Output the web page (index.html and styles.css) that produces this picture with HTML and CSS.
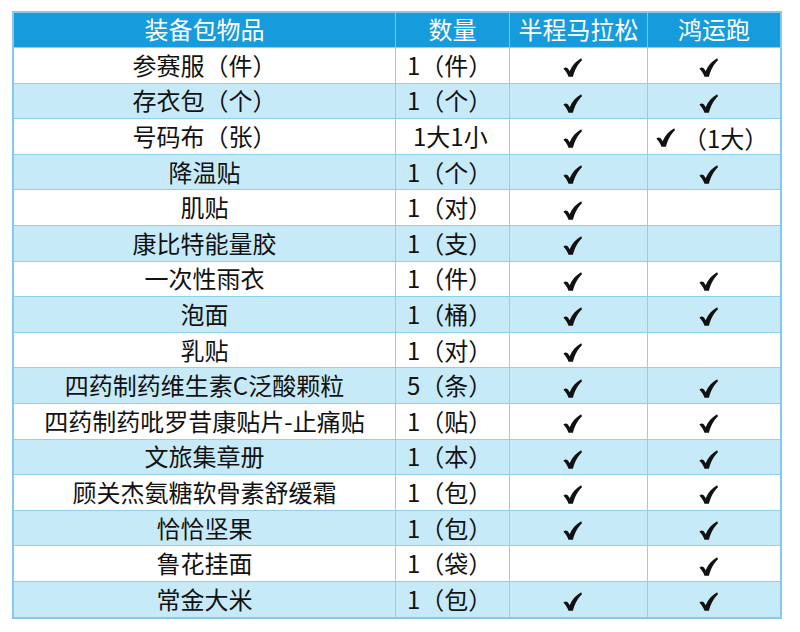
FILE: index.html
```html
<!DOCTYPE html>
<html lang="zh">
<head>
<meta charset="utf-8">
<link rel="stylesheet" href="styles.css">
</head>
<body>
<svg width="0" height="0" class="defs">
  <defs>
    <symbol id="chk" viewBox="0 0 18 18">
      <path d="M0.4 10.2 C2.2 8.4 4.1 8.9 5.3 10.9 L6.3 12.6 C8.8 7 12.3 3 17.2 0.3 L18 2.1 C14 5.8 11.4 10.6 9.4 17.7 L5.2 17.7 C4.2 15 2.7 12.4 0.4 10.2 Z"/>
    </symbol>
  </defs>
</svg>
<table class="kit">
  <thead>
    <tr><th>装备包物品</th><th>数量</th><th>半程马拉松</th><th>鸿运跑</th></tr>
  </thead>
  <tbody>
    <tr><td>参赛服（件）</td><td class="q">1（件）</td><td><svg class="c"><use href="#chk"/></svg></td><td><svg class="c"><use href="#chk"/></svg></td></tr>
    <tr><td>存衣包（个）</td><td class="q">1（个）</td><td><svg class="c"><use href="#chk"/></svg></td><td><svg class="c"><use href="#chk"/></svg></td></tr>
    <tr><td>号码布（张）</td><td class="q q2">1大1小</td><td><svg class="c"><use href="#chk"/></svg></td><td class="mix"><svg class="c"><use href="#chk"/></svg><span>（1大）</span></td></tr>
    <tr><td>降温贴</td><td class="q">1（个）</td><td><svg class="c"><use href="#chk"/></svg></td><td><svg class="c"><use href="#chk"/></svg></td></tr>
    <tr><td>肌贴</td><td class="q">1（对）</td><td><svg class="c"><use href="#chk"/></svg></td><td></td></tr>
    <tr><td>康比特能量胶</td><td class="q">1（支）</td><td><svg class="c"><use href="#chk"/></svg></td><td></td></tr>
    <tr><td>一次性雨衣</td><td class="q">1（件）</td><td><svg class="c"><use href="#chk"/></svg></td><td><svg class="c"><use href="#chk"/></svg></td></tr>
    <tr><td>泡面</td><td class="q">1（桶）</td><td><svg class="c"><use href="#chk"/></svg></td><td><svg class="c"><use href="#chk"/></svg></td></tr>
    <tr><td>乳贴</td><td class="q">1（对）</td><td><svg class="c"><use href="#chk"/></svg></td><td></td></tr>
    <tr><td>四药制药维生素C泛酸颗粒</td><td class="q">5（条）</td><td><svg class="c"><use href="#chk"/></svg></td><td><svg class="c"><use href="#chk"/></svg></td></tr>
    <tr><td>四药制药吡罗昔康贴片-止痛贴</td><td class="q">1（贴）</td><td><svg class="c"><use href="#chk"/></svg></td><td><svg class="c"><use href="#chk"/></svg></td></tr>
    <tr><td>文旅集章册</td><td class="q">1（本）</td><td><svg class="c"><use href="#chk"/></svg></td><td><svg class="c"><use href="#chk"/></svg></td></tr>
    <tr><td>顾关杰氨糖软骨素舒缓霜</td><td class="q">1（包）</td><td><svg class="c"><use href="#chk"/></svg></td><td><svg class="c"><use href="#chk"/></svg></td></tr>
    <tr><td>恰恰坚果</td><td class="q">1（包）</td><td><svg class="c"><use href="#chk"/></svg></td><td><svg class="c"><use href="#chk"/></svg></td></tr>
    <tr><td>鲁花挂面</td><td class="q">1（袋）</td><td></td><td><svg class="c"><use href="#chk"/></svg></td></tr>
    <tr><td>常金大米</td><td class="q">1（包）</td><td><svg class="c"><use href="#chk"/></svg></td><td><svg class="c"><use href="#chk"/></svg></td></tr>
  </tbody>
</table>
</body>
</html>
```

FILE: styles.css
```css
html, body {
  margin: 0;
  padding: 0;
  background: #ffffff;
}
body {
  font-family: "Noto Sans CJK SC", "Noto Sans", sans-serif;
  color: #121212;
}
.defs {
  position: absolute;
}
.kit {
  margin: 11px 0 0 12px;
  width: 770px;
  border-collapse: collapse;
  table-layout: fixed;
  border: 2px solid #86c9ea;
}
.kit th {
  background: #169bdc;
  color: #ffffff;
  font-weight: 400;
  font-size: 24px;
  height: 32px;
  padding: 0 0 2px;
  line-height: 1;
  border-left: 1px solid #7cc6ea;
}
.kit th:first-child { width: 381px; border-left: none; }
.kit th:nth-child(2) { width: 113px; }
.kit th:nth-child(3) { width: 137px; }
.kit td {
  height: 33.6px;
  padding: 0 0 1px;
  text-align: center;
  font-size: 24px;
  line-height: 1;
  border: 1px solid #8fd0ee;
  vertical-align: middle;
}
.kit tbody tr:nth-child(even) td {
  background: #c7eaf8;
}
.kit td.q {
  text-align: left;
  padding-left: 11px;
}
.kit td.q2 {
  padding-left: 17px;
}
.c {
  width: 19px;
  height: 19px;
  fill: #111111;
  vertical-align: middle;
  position: relative;
  top: 0;
  left: -6px;
}
.kit td.mix {
  text-align: left;
  padding-left: 8px;
}
.kit td.mix .c {
  left: 0;
}
.kit td.mix span {
  margin-left: 8px;
  vertical-align: middle;
}
```
